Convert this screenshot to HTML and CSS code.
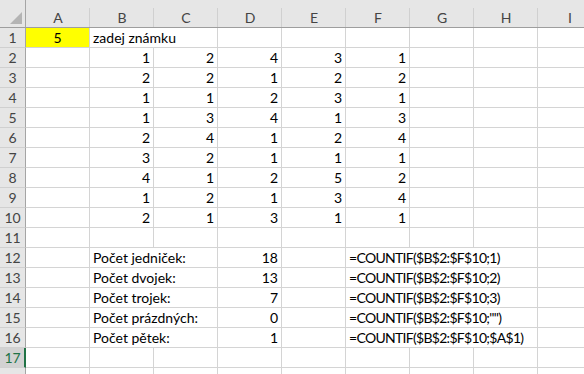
FILE: index.html
```html
<!DOCTYPE html>
<html lang="cs">
<head>
    <meta charset="UTF-8">
    <title>Sešit1 - Excel</title>
    <link rel="stylesheet" href="styles.css">
</head>
<body>
    <div class="sheet">
        <div class="row head">
            <div class="corner"><span class="tri"></span></div>
            <div class="col">A</div>
            <div class="col">B</div>
            <div class="col">C</div>
            <div class="col">D</div>
            <div class="col">E</div>
            <div class="col">F</div>
            <div class="col">G</div>
            <div class="col">H</div>
            <div class="col">I</div>
        </div>

        <div class="row">
            <div class="num">1</div>
            <div class="cell yellow center">5</div>
            <div class="cell span2">zadej známku</div>
            <div class="cell"></div>
            <div class="cell"></div>
            <div class="cell"></div>
            <div class="cell"></div>
            <div class="cell"></div>
            <div class="cell"></div>
        </div>
        <div class="row">
            <div class="num">2</div>
            <div class="cell"></div>
            <div class="cell right">1</div>
            <div class="cell right">2</div>
            <div class="cell right">4</div>
            <div class="cell right">3</div>
            <div class="cell right">1</div>
            <div class="cell"></div>
            <div class="cell"></div>
            <div class="cell"></div>
        </div>
        <div class="row">
            <div class="num">3</div>
            <div class="cell"></div>
            <div class="cell right">2</div>
            <div class="cell right">2</div>
            <div class="cell right">1</div>
            <div class="cell right">2</div>
            <div class="cell right">2</div>
            <div class="cell"></div>
            <div class="cell"></div>
            <div class="cell"></div>
        </div>
        <div class="row">
            <div class="num">4</div>
            <div class="cell"></div>
            <div class="cell right">1</div>
            <div class="cell right">1</div>
            <div class="cell right">2</div>
            <div class="cell right">3</div>
            <div class="cell right">1</div>
            <div class="cell"></div>
            <div class="cell"></div>
            <div class="cell"></div>
        </div>
        <div class="row">
            <div class="num">5</div>
            <div class="cell"></div>
            <div class="cell right">1</div>
            <div class="cell right">3</div>
            <div class="cell right">4</div>
            <div class="cell right">1</div>
            <div class="cell right">3</div>
            <div class="cell"></div>
            <div class="cell"></div>
            <div class="cell"></div>
        </div>
        <div class="row">
            <div class="num">6</div>
            <div class="cell"></div>
            <div class="cell right">2</div>
            <div class="cell right">4</div>
            <div class="cell right">1</div>
            <div class="cell right">2</div>
            <div class="cell right">4</div>
            <div class="cell"></div>
            <div class="cell"></div>
            <div class="cell"></div>
        </div>
        <div class="row">
            <div class="num">7</div>
            <div class="cell"></div>
            <div class="cell right">3</div>
            <div class="cell right">2</div>
            <div class="cell right">1</div>
            <div class="cell right">1</div>
            <div class="cell right">1</div>
            <div class="cell"></div>
            <div class="cell"></div>
            <div class="cell"></div>
        </div>
        <div class="row">
            <div class="num">8</div>
            <div class="cell"></div>
            <div class="cell right">4</div>
            <div class="cell right">1</div>
            <div class="cell right">2</div>
            <div class="cell right">5</div>
            <div class="cell right">2</div>
            <div class="cell"></div>
            <div class="cell"></div>
            <div class="cell"></div>
        </div>
        <div class="row">
            <div class="num">9</div>
            <div class="cell"></div>
            <div class="cell right">1</div>
            <div class="cell right">2</div>
            <div class="cell right">1</div>
            <div class="cell right">3</div>
            <div class="cell right">4</div>
            <div class="cell"></div>
            <div class="cell"></div>
            <div class="cell"></div>
        </div>
        <div class="row">
            <div class="num">10</div>
            <div class="cell"></div>
            <div class="cell right">2</div>
            <div class="cell right">1</div>
            <div class="cell right">3</div>
            <div class="cell right">1</div>
            <div class="cell right">1</div>
            <div class="cell"></div>
            <div class="cell"></div>
            <div class="cell"></div>
        </div>
        <div class="row">
            <div class="num">11</div>
            <div class="cell"></div>
            <div class="cell"></div>
            <div class="cell"></div>
            <div class="cell"></div>
            <div class="cell"></div>
            <div class="cell"></div>
            <div class="cell"></div>
            <div class="cell"></div>
            <div class="cell"></div>
        </div>
        <div class="row">
            <div class="num">12</div>
            <div class="cell"></div>
            <div class="cell span2">Počet jedniček:</div>
            <div class="cell right">18</div>
            <div class="cell"></div>
            <div class="cell span3 formula">=COUNTIF($B$2:$F$10;1)</div>
            <div class="cell"></div>
        </div>
        <div class="row">
            <div class="num">13</div>
            <div class="cell"></div>
            <div class="cell span2">Počet dvojek:</div>
            <div class="cell right">13</div>
            <div class="cell"></div>
            <div class="cell span3 formula">=COUNTIF($B$2:$F$10;2)</div>
            <div class="cell"></div>
        </div>
        <div class="row">
            <div class="num">14</div>
            <div class="cell"></div>
            <div class="cell span2">Počet trojek:</div>
            <div class="cell right">7</div>
            <div class="cell"></div>
            <div class="cell span3 formula">=COUNTIF($B$2:$F$10;3)</div>
            <div class="cell"></div>
        </div>
        <div class="row">
            <div class="num">15</div>
            <div class="cell"></div>
            <div class="cell span2">Počet prázdných:</div>
            <div class="cell right">0</div>
            <div class="cell"></div>
            <div class="cell span3 formula">=COUNTIF($B$2:$F$10;"")</div>
            <div class="cell"></div>
        </div>
        <div class="row">
            <div class="num">16</div>
            <div class="cell"></div>
            <div class="cell span2">Počet pětek:</div>
            <div class="cell right">1</div>
            <div class="cell"></div>
            <div class="cell span3 formula">=COUNTIF($B$2:$F$10;$A$1)</div>
            <div class="cell"></div>
        </div>
        <div class="row">
            <div class="num selected">17</div>
            <div class="cell"></div>
            <div class="cell"></div>
            <div class="cell"></div>
            <div class="cell"></div>
            <div class="cell"></div>
            <div class="cell"></div>
            <div class="cell"></div>
            <div class="cell"></div>
            <div class="cell"></div>
        </div>
        <div class="row">
            <div class="num"></div>
            <div class="cell"></div>
            <div class="cell"></div>
            <div class="cell"></div>
            <div class="cell"></div>
            <div class="cell"></div>
            <div class="cell"></div>
            <div class="cell"></div>
            <div class="cell"></div>
            <div class="cell"></div>
        </div>
    </div>
</body>
</html>
```

FILE: styles.css
```css
body {
    margin: 0;
    overflow: hidden;
    background-color: #fff;
    font-family: 'Lato', 'Liberation Sans', sans-serif;
    font-size: 14px;
    color: #000;
}

.sheet {
    width: 602px;
}

.row {
    display: grid;
    grid-template-columns: 26px repeat(9, 64px);
    height: 20px;
}

.row.head {
    height: 28px;
    background-color: #e6e6e6;
}

/* hlavicka sloupcu */
.corner {
    display: flex;
    align-items: flex-end;
    justify-content: flex-end;
    padding: 0 3px 3px 0;
    border-right: 1px solid #a5a5a5;
    border-bottom: 1px solid #9e9e9e;
    box-sizing: border-box;
}

.tri {
    width: 0;
    height: 0;
    border-left: 12px solid transparent;
    border-bottom: 12px solid #b4b4b4;
}

.col {
    display: flex;
    align-items: center;
    justify-content: center;
    padding-top: 8px;
    color: #444;
    border-bottom: 1px solid #9e9e9e;
    background-image: linear-gradient(#d0d0d0, #d0d0d0);
    background-size: 1px 19px;
    background-position: right bottom;
    background-repeat: no-repeat;
    box-sizing: border-box;
}

/* cisla radku */
.num {
    display: flex;
    align-items: center;
    justify-content: center;
    background-color: #e6e6e6;
    color: #444;
    border-right: 1px solid #a5a5a5;
    border-bottom: 1px solid #d0d0d0;
    box-sizing: border-box;
}

.num.selected {
    background-color: #d2d2d2;
    color: #217346;
    border-right: 2px solid #217346;
    padding-left: 1px;
}

.cell {
    display: flex;
    align-items: flex-end;
    padding: 0 3px 1px 3px;
    line-height: 17px;
    white-space: nowrap;
    border-right: 1px solid #d4d4d4;
    border-bottom: 1px solid #d4d4d4;
    box-sizing: border-box;
}

.right {
    justify-content: flex-end;
}

.center {
    justify-content: center;
}

.yellow {
    background-color: #ffff00;
}

.span2 {
    grid-column: span 2;
}

.span3 {
    grid-column: span 3;
}

.formula {
    letter-spacing: -0.7px;
}
```
